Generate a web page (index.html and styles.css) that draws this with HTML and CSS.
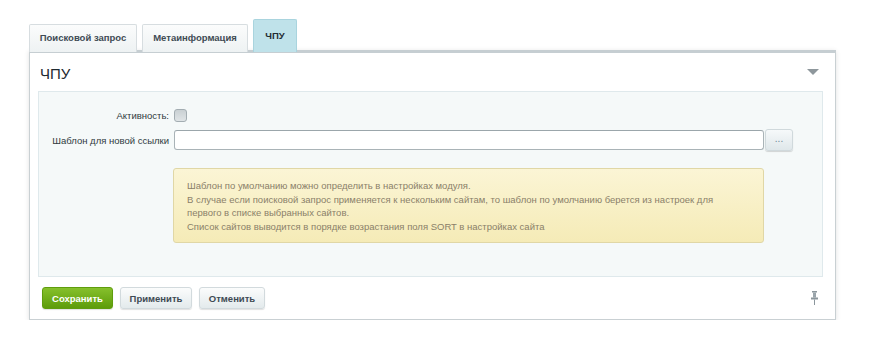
FILE: index.html
```html
<!DOCTYPE html>
<html>
<head>
    <title>ЧПУ</title>
    <link rel="stylesheet" href="styles.css">
</head>
<body>
    <div class="editor">
        <div class="tabs">
            <div class="tab">Поисковой запрос</div>
            <div class="tab">Метаинформация</div>
            <div class="tab active">ЧПУ</div>
        </div>

        <div class="panel">
            <div class="panel-head">
                <span class="panel-title">ЧПУ</span>
                <span class="toggle"></span>
            </div>

            <div class="content">
                <div class="row">
                    <label class="field-label">Активность:</label>
                    <span class="checkbox"></span>
                </div>
                <div class="row">
                    <label class="field-label">Шаблон для новой ссылки</label>
                    <input class="text-input" type="text">
                    <button class="dots-btn">...</button>
                </div>
                <div class="notice">
                    Шаблон по умолчанию можно определить в настройках модуля.<br>
                    В случае если поисковой запрос применяется к нескольким сайтам, то шаблон по умолчанию берется из настроек для<br>
                    первого в списке выбранных сайтов.<br>
                    Список сайтов выводится в порядке возрастания поля SORT в настройках сайта
                </div>
            </div>

            <div class="footer">
                <button class="btn btn-save">Сохранить</button>
                <button class="btn btn-apply">Применить</button>
                <button class="btn btn-cancel">Отменить</button>
                <svg class="pin" width="9" height="14" viewBox="0 0 9 14">
                    <rect x="2" y="0" width="5" height="1.5" fill="#8b969c"/>
                    <rect x="3" y="1.5" width="3" height="5" fill="#9aa5ab"/>
                    <rect x="1" y="6.5" width="7" height="2" fill="#8b969c"/>
                    <rect x="4" y="8.5" width="1" height="5.5" fill="#8b969c"/>
                </svg>
            </div>
        </div>
    </div>
</body>
</html>
```

FILE: styles.css
```css
body {
    margin: 0;
    background: #fff;
    font-family: "Liberation Sans", Arial, sans-serif;
    font-size: 9.5px;
    color: #3f4b54;
}

.editor {
    width: 807px;
    margin: 19px 0 0 29px;
}

.tabs {
    display: flex;
    align-items: flex-end;
    gap: 5px;
    height: 33px;
    margin-bottom: -2px;
    position: relative;
    z-index: 1;
}

.tab {
    height: 28px;
    line-height: 26px;
    padding: 0;
    text-align: center;
    white-space: nowrap;
    border: 1px solid #d7dde0;
    border-bottom: none;
    border-radius: 2px 2px 0 0;
    background: linear-gradient(#fbfcfc, #eef2f3);
    font-weight: bold;
    color: #3f4b54;
    box-sizing: border-box;
}

.tab:nth-child(1) { width: 108px; }
.tab:nth-child(2) { width: 106px; }

.tab.active {
    height: 33px;
    line-height: 31px;
    width: 44px;
    border-color: #a9d4de;
    background: #bfe2ea;
    color: #1f2c33;
}

.panel {
    border: 1px solid #c9d0d3;
    border-top: 3px solid #c6ced2;
    box-shadow: 0 1px 5px rgba(0, 0, 0, 0.12);
    background: #fff;
    padding: 0 12px 10px 8px;
}

.panel-head {
    display: flex;
    justify-content: space-between;
    align-items: center;
    height: 38px;
    padding: 0 2px;
}

.panel-title {
    font-size: 15px;
    color: #1e2a31;
    padding-top: 2px;
}

.toggle {
    width: 0;
    height: 0;
    border-left: 6px solid transparent;
    border-right: 6px solid transparent;
    border-top: 6px solid #8e979c;
    margin-right: 2px;
}

.content {
    background: #f5f9f9;
    border: 1px solid #dfe9ec;
    height: 186px;
    padding-top: 17px;
    box-sizing: border-box;
}

.row {
    display: flex;
    align-items: center;
    margin-bottom: 7px;
}

.field-label {
    width: 130px;
    text-align: right;
    padding-right: 5px;
    white-space: nowrap;
    color: #2f3a40;
}

.checkbox {
    width: 11px;
    height: 11px;
    border: 1px solid #a3adb2;
    border-radius: 3px;
    background: linear-gradient(#c9d0d3, #dfe4e6);
}

.text-input {
    width: 590px;
    height: 20px;
    margin: 0;
    border: 1px solid #a9b3b7;
    border-top-color: #9ba6ab;
    border-radius: 3px;
    box-sizing: border-box;
    background: #fff;
}

.dots-btn {
    width: 28px;
    height: 22px;
    margin-left: 1px;
    border: 1px solid #d0d9dc;
    border-radius: 3px;
    background: linear-gradient(#f6f9fa, #dfe7ea);
    box-shadow: 0 1px 1px rgba(0, 0, 0, 0.15);
    font-family: "Liberation Sans", Arial, sans-serif;
    font-size: 10px;
    color: #6f8a99;
    padding: 0 0 4px;
}

.notice {
    width: 591px;
    box-sizing: border-box;
    margin: 17px 0 0 134px;
    padding: 10px 13px 9px;
    border: 1px solid #e0d7a6;
    border-radius: 3px;
    background: linear-gradient(#fbf5d5, #f5ebb7);
    color: #8a8069;
    line-height: 13.5px;
    white-space: nowrap;
}

.footer {
    display: flex;
    align-items: center;
    gap: 7px;
    padding: 10px 0 0 4px;
}

.btn {
    height: 22px;
    padding: 0;
    border: 1px solid #d2dadd;
    border-radius: 3px;
    background: linear-gradient(#fbfcfc, #e3eaec);
    box-shadow: 0 1px 1px rgba(0, 0, 0, 0.12);
    font-family: "Liberation Sans", Arial, sans-serif;
    font-size: 9.5px;
    font-weight: bold;
    color: #3f4b54;
}

.btn-save {
    width: 71px;
    border-color: #5f9d0d;
    background: linear-gradient(#86c02c, #5d9c0a);
    color: #fff;
}

.btn-apply { width: 72px; }
.btn-cancel { width: 66px; }

.pin {
    margin-left: auto;
    margin-right: 4px;
}
```
